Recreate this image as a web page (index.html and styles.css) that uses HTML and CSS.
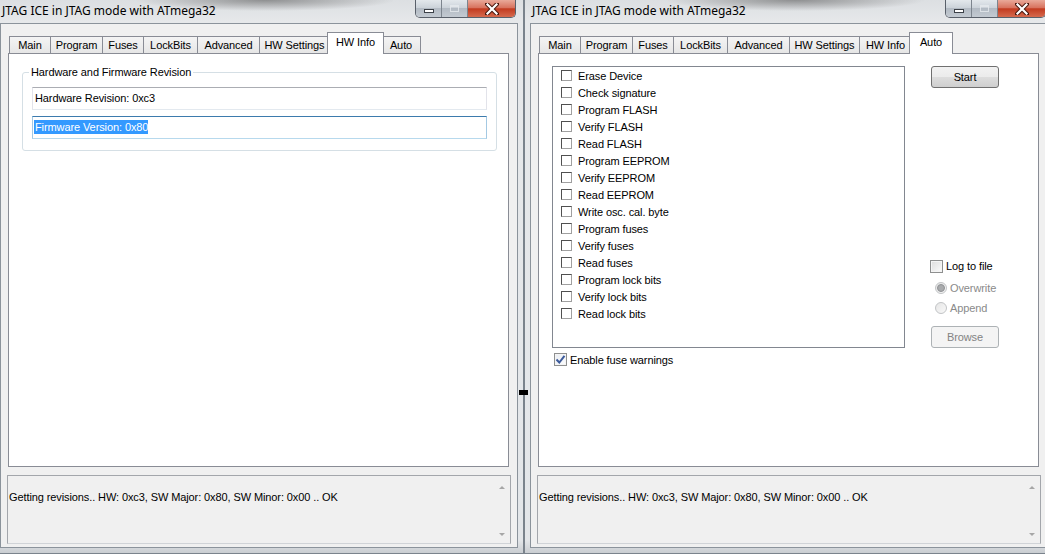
FILE: index.html
```html
<!DOCTYPE html>
<html lang="en">
<head>
    <meta charset="UTF-8">
    <title>JTAG ICE in JTAG mode with ATmega32</title>
    <link rel="stylesheet" href="styles.css">
</head>
<body>
    <div class="desktop">
        <!-- left window: HW Info tab -->
        <div class="window">
            <div class="titlebar">
                <span class="title">JTAG ICE in JTAG mode with ATmega32</span>
                <div class="caption-buttons">
                    <span class="cap-btn cap-min"><i></i></span>
                    <span class="cap-btn cap-max"><i></i></span>
                    <span class="cap-btn cap-close">
                        <svg width="14" height="12" viewBox="0 0 14 12">
                            <path d="M2 1 L12 11 M12 1 L2 11" stroke="#4a1a10" stroke-width="4.2" stroke-linecap="square"/>
                            <path d="M2.5 1.5 L11.5 10.5 M11.5 1.5 L2.5 10.5" stroke="#fff" stroke-width="2.2" stroke-linecap="square"/>
                        </svg>
                    </span>
                </div>
            </div>
            <div class="client">
                <div class="tab-control">
                    <div class="tab-strip">
                        <span class="tab t-main">Main</span>
                        <span class="tab t-program">Program</span>
                        <span class="tab t-fuses">Fuses</span>
                        <span class="tab t-lock">LockBits</span>
                        <span class="tab t-adv">Advanced</span>
                        <span class="tab t-hwset">HW Settings</span>
                        <span class="tab t-hwinfo selected">HW Info</span>
                        <span class="tab t-auto">Auto</span>
                    </div>
                    <div class="tab-page hwinfo">
                        <fieldset class="group">
                            <legend>Hardware and Firmware Revision</legend>
                            <div class="textbox">Hardware Revision: 0xc3</div>
                            <div class="textbox focused"><span class="sel">Firmware Version: 0x80</span></div>
                        </fieldset>
                    </div>
                </div>
                <div class="status">
                    <div class="status-text">Getting revisions.. HW: 0xc3, SW Major: 0x80, SW Minor: 0x00 .. OK</div>
                    <div class="scroll"><i class="arrow-up"></i><i class="arrow-down"></i></div>
                </div>
            </div>
        </div>

        <!-- right window: Auto tab -->
        <div class="window">
            <div class="titlebar">
                <span class="title">JTAG ICE in JTAG mode with ATmega32</span>
                <div class="caption-buttons">
                    <span class="cap-btn cap-min"><i></i></span>
                    <span class="cap-btn cap-max"><i></i></span>
                    <span class="cap-btn cap-close">
                        <svg width="14" height="12" viewBox="0 0 14 12">
                            <path d="M2 1 L12 11 M12 1 L2 11" stroke="#4a1a10" stroke-width="4.2" stroke-linecap="square"/>
                            <path d="M2.5 1.5 L11.5 10.5 M11.5 1.5 L2.5 10.5" stroke="#fff" stroke-width="2.2" stroke-linecap="square"/>
                        </svg>
                    </span>
                </div>
            </div>
            <div class="client">
                <div class="tab-control">
                    <div class="tab-strip">
                        <span class="tab t-main">Main</span>
                        <span class="tab t-program">Program</span>
                        <span class="tab t-fuses">Fuses</span>
                        <span class="tab t-lock">LockBits</span>
                        <span class="tab t-adv">Advanced</span>
                        <span class="tab t-hwset">HW Settings</span>
                        <span class="tab t-hwinfo">HW Info</span>
                        <span class="tab t-auto selected">Auto</span>
                    </div>
                    <div class="tab-page auto">
                        <div class="auto-left">
                            <div class="checklist">
                                <div class="item"><i class="flat-box"></i>Erase Device</div>
                                <div class="item"><i class="flat-box"></i>Check signature</div>
                                <div class="item"><i class="flat-box"></i>Program FLASH</div>
                                <div class="item"><i class="flat-box"></i>Verify FLASH</div>
                                <div class="item"><i class="flat-box"></i>Read FLASH</div>
                                <div class="item"><i class="flat-box"></i>Program EEPROM</div>
                                <div class="item"><i class="flat-box"></i>Verify EEPROM</div>
                                <div class="item"><i class="flat-box"></i>Read EEPROM</div>
                                <div class="item"><i class="flat-box"></i>Write osc. cal. byte</div>
                                <div class="item"><i class="flat-box"></i>Program fuses</div>
                                <div class="item"><i class="flat-box"></i>Verify fuses</div>
                                <div class="item"><i class="flat-box"></i>Read fuses</div>
                                <div class="item"><i class="flat-box"></i>Program lock bits</div>
                                <div class="item"><i class="flat-box"></i>Verify lock bits</div>
                                <div class="item"><i class="flat-box"></i>Read lock bits</div>
                            </div>
                            <label class="check-row warn">
                                <span class="checkbox checked">
                                    <svg width="11" height="11" viewBox="0 0 11 11">
                                        <path d="M1.5 5.5 L4.3 8.5 L9.5 1.8" fill="none" stroke="#3c5a9a" stroke-width="2"/>
                                    </svg>
                                </span>
                                Enable fuse warnings
                            </label>
                        </div>
                        <div class="auto-right">
                            <span class="button">Start</span>
                            <label class="check-row log"><span class="checkbox"></span>Log to file</label>
                            <label class="radio-row"><span class="radio on"></span>Overwrite</label>
                            <label class="radio-row"><span class="radio"></span>Append</label>
                            <span class="button disabled">Browse</span>
                        </div>
                    </div>
                </div>
                <div class="status">
                    <div class="status-text">Getting revisions.. HW: 0xc3, SW Major: 0x80, SW Minor: 0x00 .. OK</div>
                    <div class="scroll"><i class="arrow-up"></i><i class="arrow-down"></i></div>
                </div>
            </div>
        </div>
    </div>
</body>
</html>
```

FILE: styles.css
```css
* {
    box-sizing: border-box;
}

body {
    margin: 0;
    width: 1045px;
    height: 554px;
    overflow: hidden;
    background: #e8eaec;
    font-family: "Liberation Sans", Arial, sans-serif;
    font-size: 11px;
    letter-spacing: -0.1px;
    color: #000;
}

.desktop {
    display: flex;
    margin-left: -6px;
    height: 554px;
    position: relative;
}

/* little dark speck between the two windows */
.desktop::after {
    content: "";
    position: absolute;
    left: 525px;
    top: 390px;
    width: 9px;
    height: 5px;
    background: #000;
}

.window {
    width: 530px;
    flex: none;
    display: flex;
    flex-direction: column;
    padding: 0 5px 5px;
    border: 1px solid #7a838c;
    border-top: none;
    background: linear-gradient(to bottom, #dcdfe2 0, #e6e8ea 22px, #e3e6e9 540px, #c9cdd1 100%);
}

.titlebar {
    height: 23px;
    display: flex;
    align-items: flex-start;
    background: radial-gradient(ellipse 130px 11px at 265px 0, rgba(90, 90, 90, 0.6), rgba(90, 90, 90, 0));
}

.title {
    font-family: "Noto Sans", "Open Sans", sans-serif;
    font-size: 12px;
    letter-spacing: 0;
    line-height: 21px;
    margin-left: 2px;
    color: #000;
}

.caption-buttons {
    margin-left: auto;
    margin-right: 2px;
    display: flex;
    height: 18px;
    border: 1px solid #59606a;
    border-top: none;
    border-radius: 0 0 5px 5px;
    overflow: hidden;
}

.cap-btn {
    display: flex;
    align-items: center;
    justify-content: center;
    height: 100%;
}

.cap-min,
.cap-max {
    width: 26px;
    border-right: 1px solid #7d858e;
    background: linear-gradient(to bottom, #e3e8ec 0, #ccd3da 45%, #b3bbc4 50%, #c3cad1 100%);
}

.cap-min i {
    display: block;
    width: 10px;
    height: 4px;
    margin-top: 5px;
    background: #fff;
    border: 1px solid #3c4148;
}

.cap-max i {
    display: block;
    width: 9px;
    height: 7px;
    border: 1px solid #e6eaee;
    border-top-width: 2px;
    opacity: 0.8;
}

.cap-close {
    width: 47px;
    background: linear-gradient(to bottom, #e9a999 0, #d8735f 45%, #c23b20 52%, #d66a4e 100%);
}

.client {
    height: 525px;
    flex: none;
    border: 1px solid #8b939b;
    background: #f0f0f0;
    padding: 8px 8px 0 7px;
    display: flex;
    flex-direction: column;
}

.tab-strip {
    height: 21px;
    display: flex;
    align-items: flex-end;
    padding-left: 1px;
}

.tab {
    box-sizing: content-box;
    height: 16px;
    line-height: 16px;
    padding: 0;
    margin-left: -1px;
    text-align: center;
    border: 1px solid #898c95;
    border-bottom: none;
    background: linear-gradient(to bottom, #f4f4f4, #e6e6e6);
    white-space: nowrap;
}

.tab:first-child {
    margin-left: 0;
}

.t-main { width: 40px; }
.t-program { width: 51px; }
.t-fuses { width: 40px; }
.t-lock { width: 53px; }
.t-adv { width: 61px; }
.t-hwset { width: 69px; }
.t-hwinfo { width: 51px; }
.t-auto { width: 38px; }

.tab.selected {
    position: relative;
    z-index: 1;
    height: 21px;
    line-height: 19px;
    margin: 0 -2px -1px -3px;
    padding: 0 2px;
    background: #fff;
}

.tab-page {
    height: 414px;
    border: 1px solid #898c95;
    background: #fff;
}

/* HW Info page */
.hwinfo {
    padding: 12px 11px 0 13px;
}

.group {
    margin: 0;
    padding: 8px 9px 11px;
    border: 1px solid #d5dfe5;
    border-radius: 3px;
}

.group legend {
    padding: 0 2px;
    margin-left: -3px;
    line-height: 13px;
}

.textbox {
    height: 23px;
    line-height: 20px;
    padding-left: 2px;
    border: 1px solid #e2e3ea;
    border-top-color: #abadb3;
    border-bottom-color: #e3e9ef;
    background: #fff;
}

.textbox + .textbox {
    margin-top: 6px;
}

.textbox.focused {
    border-color: #a4c9e3;
    border-top-color: #3d7bad;
    border-bottom-color: #b7d9ed;
}

.sel {
    background: #3399ff;
    color: #fff;
    padding: 1px 0 1px 1px;
    margin-left: -1px;
}

/* Auto page */
.auto {
    display: flex;
    padding: 12px 0 0 13px;
}

.checklist {
    width: 353px;
    height: 282px;
    border: 1px solid #828790;
    background: #fff;
    padding: 0 0 0 8px;
}

.item {
    height: 17px;
    display: flex;
    align-items: center;
}

.flat-box {
    width: 11px;
    height: 11px;
    margin-right: 6px;
    border: 1px solid #a0a0a0;
    border-top-color: #505050;
    border-left-color: #505050;
    background: #fff;
}

.check-row,
.radio-row {
    display: flex;
    align-items: center;
}

.checkbox {
    width: 13px;
    height: 13px;
    border: 1px solid #8e8f8f;
    background: linear-gradient(135deg, #dcdcdc, #fbfbfb);
    box-shadow: inset 0 0 0 1px #f4f4f4;
    display: flex;
    align-items: center;
    justify-content: center;
}

.checkbox.checked {
    background: linear-gradient(135deg, #e8ecf2, #fdfdfd);
}

.warn {
    margin: 5px 0 0 2px;
    height: 13px;
}

.warn .checkbox {
    margin-right: 3px;
}

.auto-right {
    margin-left: 25px;
    display: flex;
    flex-direction: column;
    align-items: flex-start;
}

.button {
    width: 68px;
    height: 22px;
    margin-left: 1px;
    line-height: 20px;
    text-align: center;
    border: 1px solid #707070;
    border-radius: 3px;
    background: linear-gradient(to bottom, #f2f2f2 0, #ebebeb 50%, #dddddd 50%, #cfcfcf 100%);
}

.button.disabled {
    margin-top: 8px;
    color: #838383;
    border-color: #adb2b5;
    background: #f4f4f4;
}

.log {
    margin-top: 168px;
    height: 20px;
}

.log .checkbox {
    margin-right: 3px;
}

.radio-row {
    height: 20px;
    margin-left: 5px;
    color: #8a8a8a;
}

.log + .radio-row {
    margin-top: 2px;
}

.radio {
    width: 12px;
    height: 12px;
    margin-right: 3px;
    border: 1px solid #c2c4c6;
    border-radius: 50%;
    background: linear-gradient(135deg, #e6e6e6, #f8f8f8);
    display: flex;
    align-items: center;
    justify-content: center;
}

.radio.on::after {
    content: "";
    width: 6px;
    height: 6px;
    border-radius: 50%;
    background: #a9abad;
    border: 1px solid #8f9194;
}

/* status log */
.status {
    height: 69px;
    margin: 8px -2px 0 -1px;
    display: flex;
    border: 1px solid #a3a6ab;
    border-bottom-color: #d0d3d7;
    background: #f0f0f0;
}

.status-text {
    flex: 1;
    padding: 15px 0 0 1px;
    white-space: nowrap;
}

.scroll {
    width: 17px;
    display: flex;
    flex-direction: column;
    justify-content: space-between;
    align-items: center;
    padding: 10px 0 7px;
}

.arrow-up,
.arrow-down {
    width: 0;
    height: 0;
    border-left: 3px solid transparent;
    border-right: 3px solid transparent;
}

.arrow-up {
    border-bottom: 3px solid #a6a6a6;
}

.arrow-down {
    border-top: 3px solid #a6a6a6;
}
```
